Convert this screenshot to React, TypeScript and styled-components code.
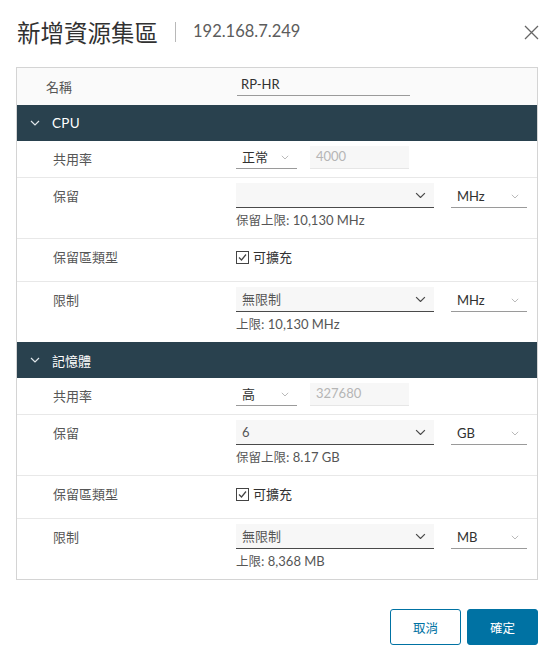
import React from "react";
import styled, { createGlobalStyle } from "styled-components";

const Global = createGlobalStyle`
  html, body { margin: 0; padding: 0; background: #fff; }
  body { font-family: Lato, "Noto Sans CJK TC", sans-serif; color: #313131; }
  * { box-sizing: border-box; }
`;

const Dialog = styled.div`
  width: 555px;
  height: 659px;
  display: flex;
  flex-direction: column;
  padding: 0 17px 0 16px;
`;

const Header = styled.div`
  height: 67px;
  display: flex;
  align-items: flex-start;
  padding-top: 16px;
`;

const Title = styled.h1`
  margin: 0;
  font-family: "Noto Sans CJK TC", sans-serif;
  font-weight: 400;
  font-size: 23.5px;
  line-height: 32px;
  color: #313131;
  padding-left: 1px;
`;

const Divider = styled.div`
  width: 1px;
  height: 20px;
  background: #b8b8b8;
  margin: 6px 17px 0 17px;
`;

const Sub = styled.div`
  font-family: Lato, sans-serif;
  font-size: 16.5px;
  line-height: 32px;
  color: #5c5c5c;
  margin-top: -1px;
`;

const Close = styled.button`
  margin-left: auto;
  margin-top: 7px;
  margin-right: -2px;
  border: 0;
  background: none;
  padding: 0;
  width: 18px;
  height: 18px;
  display: flex;
  align-items: center;
  justify-content: center;
`;

const Panel = styled.div`
  border: 1px solid #d4d4d4;
  display: flex;
  flex-direction: column;
  height: 513px;
`;

const Row = styled.div<{ $h: number; $bg?: string; $border?: boolean }>`
  display: grid;
  grid-template-columns: 219px 1fr;
  height: ${(p) => p.$h}px;
  background: ${(p) => p.$bg || "#fff"};
  border-bottom: ${(p) => (p.$border ? "1px solid #e8e8e8" : "none")};
`;

const Label = styled.div<{ $pl?: number; $pt: number }>`
  font-family: "Noto Sans CJK TC", sans-serif;
  font-size: 13px;
  line-height: 18px;
  color: #565656;
  padding-left: ${(p) => p.$pl ?? 36}px;
  padding-top: ${(p) => p.$pt}px;
`;

const Field = styled.div<{ $pt: number }>`
  padding-top: ${(p) => p.$pt}px;
  display: flex;
  flex-direction: column;
`;

const Inline = styled.div`
  display: flex;
  align-items: flex-end;
`;

const NameInput = styled.div`
  width: 173px;
  margin-left: 1px;
  height: 22px;
  border-bottom: 1px solid #9a9a9a;
  font-family: Lato, sans-serif;
  font-size: 13px;
  line-height: 20px;
  padding-left: 4px;
  color: #313131;
`;

const SectionHeader = styled.div`
  height: 36px;
  background: #29414e;
  display: flex;
  align-items: center;
  padding-left: 13px;
  color: #fff;
  font-size: 13px;
  gap: 12px;
`;

const SectionTitle = styled.span<{ $cjk?: boolean }>`
  font-weight: 400;
  font-family: ${(p) => (p.$cjk ? `"Noto Sans CJK TC", sans-serif` : `Lato, sans-serif`)};
  font-size: ${(p) => (p.$cjk ? "13px" : "13.5px")};
  letter-spacing: ${(p) => (p.$cjk ? "0" : "0.3px")};
`;

const SmallSelect = styled.div<{ $w: number; $bg?: boolean; $line: string; $ml?: number }>`
  width: ${(p) => p.$w}px;
  height: ${(p) => (p.$bg ? 25 : 23)}px;
  margin-left: ${(p) => p.$ml ?? 0}px;
  background: ${(p) => (p.$bg ? "#f7f7f7" : "transparent")};
  border-bottom: 1px solid ${(p) => p.$line};
  display: flex;
  align-items: center;
  padding: 0 8px 0 6px;
  font-size: 13px;
  color: #313131;
`;

const SelectText = styled.span<{ $cjk?: boolean; $color?: string }>`
  flex: 1;
  font-family: ${(p) => (p.$cjk ? `"Noto Sans CJK TC", sans-serif` : `Lato, sans-serif`)};
  color: ${(p) => p.$color || "#313131"};
  line-height: 18px;
`;

const NumberBox = styled.div`
  width: 99px;
  height: 23px;
  margin-left: 13px;
  background: #f7f7f7;
  border-bottom: 1px solid #e6e6e6;
  font-family: Lato, sans-serif;
  font-size: 13px;
  color: #b5b5b5;
  padding-left: 6px;
  line-height: 20px;
`;

const Help = styled.div`
  font-family: "Noto Sans CJK TC", Lato, sans-serif;
  font-size: 12.5px;
  line-height: 16px;
  color: #565656;
  margin-top: 4px;
`;

const HelpNum = styled.span`
  font-family: Lato, sans-serif;
  font-size: 13px;
`;

const Check = styled.label`
  display: flex;
  align-items: center;
  gap: 4px;
  font-family: "Noto Sans CJK TC", sans-serif;
  font-size: 13px;
  color: #313131;
  line-height: 18px;
`;

const Footer = styled.div`
  display: flex;
  justify-content: flex-end;
  gap: 6px;
  padding-top: 29px;
`;

const Btn = styled.button<{ $primary?: boolean }>`
  width: 71px;
  height: 36px;
  border-radius: 3px;
  border: 1px solid #0072a3;
  background: ${(p) => (p.$primary ? "#0072a3" : "#fff")};
  color: ${(p) => (p.$primary ? "#fff" : "#0072a3")};
  font-family: "Noto Sans CJK TC", sans-serif;
  font-size: 12.5px;
  padding: 0;
`;

const Chevron = ({ size, color, w = 1 }: { size: number; color: string; w?: number }) => (
  <svg width={size} height={size * 0.6} viewBox="0 0 10 6" style={{ display: "block" }}>
    <path d="M1 1 L5 5 L9 1" fill="none" stroke={color} strokeWidth={w} />
  </svg>
);

const CheckBox = () => (
  <svg width="13" height="13" viewBox="0 0 13 13" style={{ display: "block" }}>
    <rect x="0.5" y="0.5" width="12" height="12" fill="#fff" stroke="#444" />
    <path d="M3 6.5 L5.5 9 L10 3.5" fill="none" stroke="#444" strokeWidth="1.2" />
  </svg>
);

type Sec = {
  title: string;
  cjk: boolean;
  share: string;
  shareNum: string;
  reserve: string;
  resUnit: string;
  resHelp: [string, string];
  limitUnit: string;
  limHelp: string;
};

const sections: Sec[] = [
  {
    title: "CPU",
    cjk: false,
    share: "正常",
    shareNum: "4000",
    reserve: "",
    resUnit: "MHz",
    resHelp: ["保留上限:", " 10,130 MHz"],
    limitUnit: "MHz",
    limHelp: " 10,130 MHz",
  },
  {
    title: "記憶體",
    cjk: true,
    share: "高",
    shareNum: "327680",
    reserve: "6",
    resUnit: "GB",
    resHelp: ["保留上限:", " 8.17 GB"],
    limitUnit: "MB",
    limHelp: " 8,368 MB",
  },
];

const Section = ({ s }: { s: Sec }) => (
  <>
    <SectionHeader>
      <Chevron size={10} color="#e0e6ea" w={1.2} />
      <SectionTitle $cjk={s.cjk}>{s.title}</SectionTitle>
    </SectionHeader>
    <Row $h={37} $border>
      <Label $pt={9}>共用率</Label>
      <Field $pt={5}>
        <Inline>
          <SmallSelect $w={61} $line="#9a9a9a">
            <SelectText $cjk>{s.share}</SelectText>
            <Chevron size={8} color="#a8a8a8" />
          </SmallSelect>
          <NumberBox>{s.shareNum}</NumberBox>
        </Inline>
      </Field>
    </Row>
    <Row $h={61} $border>
      <Label $pt={9}>保留</Label>
      <Field $pt={5}>
        <Inline>
          <SmallSelect $w={198} $bg $line="#4a4a4a">
            <SelectText $color="#565656">{s.reserve}</SelectText>
            <Chevron size={11} color="#4a4a4a" w={1.1} />
          </SmallSelect>
          <SmallSelect $w={76} $line="#9a9a9a" $ml={17}>
            <SelectText>{s.resUnit}</SelectText>
            <Chevron size={8} color="#a8a8a8" />
          </SmallSelect>
        </Inline>
        <Help>
          {s.resHelp[0]}
          <HelpNum>{s.resHelp[1]}</HelpNum>
        </Help>
      </Field>
    </Row>
    <Row $h={43} $border>
      <Label $pt={9}>保留區類型</Label>
      <Field $pt={9}>
        <Check>
          <CheckBox />
          可擴充
        </Check>
      </Field>
    </Row>
    <Row $h={60}>
      <Label $pt={9}>限制</Label>
      <Field $pt={5}>
        <Inline>
          <SmallSelect $w={198} $bg $line="#4a4a4a">
            <SelectText $cjk $color="#565656">無限制</SelectText>
            <Chevron size={11} color="#4a4a4a" w={1.1} />
          </SmallSelect>
          <SmallSelect $w={76} $line="#9a9a9a" $ml={17}>
            <SelectText>{s.limitUnit}</SelectText>
            <Chevron size={8} color="#a8a8a8" />
          </SmallSelect>
        </Inline>
        <Help>
          上限:
          <HelpNum>{s.limHelp}</HelpNum>
        </Help>
      </Field>
    </Row>
  </>
);

export default function App() {
  return (
    <>
      <Global />
      <Dialog>
        <Header>
          <Title>新增資源集區</Title>
          <Divider />
          <Sub>192.168.7.249</Sub>
          <Close aria-label="close">
            <svg width="15" height="15" viewBox="0 0 15 15">
              <path d="M1 1 L14 14 M14 1 L1 14" stroke="#666" strokeWidth="1.3" />
            </svg>
          </Close>
        </Header>
        <Panel>
          <Row $h={37} $bg="#fafafa">
            <Label $pl={29} $pt={10}>名稱</Label>
            <Field $pt={6}>
              <NameInput>RP-HR</NameInput>
            </Field>
          </Row>
          {sections.map((s) => (
            <Section key={s.title} s={s} />
          ))}
        </Panel>
        <Footer>
          <Btn>取消</Btn>
          <Btn $primary>確定</Btn>
        </Footer>
      </Dialog>
    </>
  );
}
